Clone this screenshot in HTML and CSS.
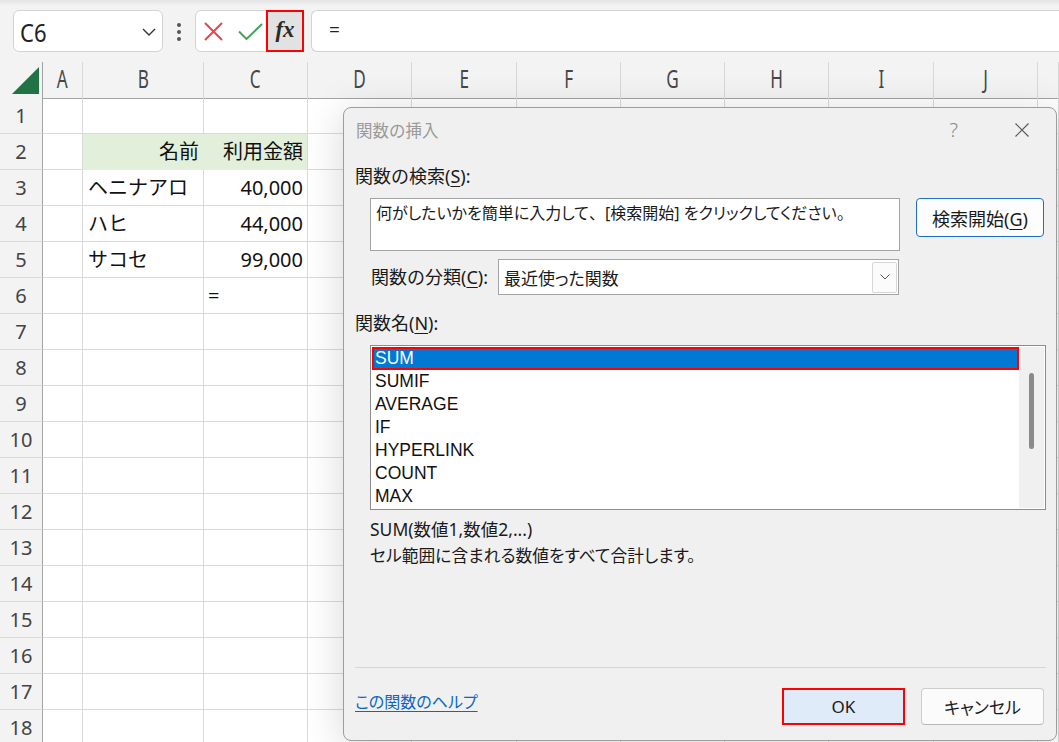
FILE: index.html
```html
<!DOCTYPE html>
<html lang="ja">
<head>
<meta charset="utf-8">
<title>関数の挿入</title>
<link rel="stylesheet" href="styles.css">
</head>
<body>
<div class="app">
  <div class="fbar">
    <div class="namebox">
      <span class="nb-text">C6</span>
      <svg class="nb-chev" width="14" height="8" viewBox="0 0 14 8"><path d="M1 1 L7 7 L13 1" fill="none" stroke="#333" stroke-width="1.4"/></svg>
    </div>
    <div class="kebab"><i></i><i></i><i></i></div>
    <div class="fbtns">
      <svg class="fb-x" width="19" height="19" viewBox="0 0 19 19"><path d="M1 1 L18 18 M18 1 L1 18" stroke="#e8464c" stroke-width="2" fill="none"/></svg>
      <svg class="fb-ok" width="25" height="17" viewBox="0 0 25 17"><path d="M1 8.5 L8.5 16 L24 1" stroke="#46a35a" stroke-width="2" fill="none"/></svg>
      <span class="fb-fx">fx</span>
    </div>
    <div class="finput">=</div>
  </div>

  <div class="sheet">
    <div class="row hdr">
      <div class="c rh corner"><svg width="42" height="35" viewBox="0 0 42 35"><polygon points="39,5 39,32 12,32" fill="#217346"/></svg></div>
      <div class="c ch"><span>A</span></div>
      <div class="c ch"><span>B</span></div>
      <div class="c ch"><span>C</span></div>
      <div class="c ch"><span>D</span></div>
      <div class="c ch"><span>E</span></div>
      <div class="c ch"><span>F</span></div>
      <div class="c ch"><span>G</span></div>
      <div class="c ch"><span>H</span></div>
      <div class="c ch"><span>I</span></div>
      <div class="c ch"><span>J</span></div>
      <div class="c ch"><span></span></div>
    </div>
    <div class="row"><div class="c rh">1</div><div class="c"></div><div class="c"></div><div class="c"></div><div class="c"></div><div class="c"></div><div class="c"></div><div class="c"></div><div class="c"></div><div class="c"></div><div class="c"></div><div class="c"></div></div>
    <div class="row"><div class="c rh">2</div><div class="c"></div><div class="c fill fill-l r">名前</div><div class="c fill r">利用金額</div><div class="c"></div><div class="c"></div><div class="c"></div><div class="c"></div><div class="c"></div><div class="c"></div><div class="c"></div><div class="c"></div></div>
    <div class="row"><div class="c rh">3</div><div class="c"></div><div class="c">ヘニナアロ</div><div class="c r">40,000</div><div class="c"></div><div class="c"></div><div class="c"></div><div class="c"></div><div class="c"></div><div class="c"></div><div class="c"></div><div class="c"></div></div>
    <div class="row"><div class="c rh">4</div><div class="c"></div><div class="c">ハヒ</div><div class="c r">44,000</div><div class="c"></div><div class="c"></div><div class="c"></div><div class="c"></div><div class="c"></div><div class="c"></div><div class="c"></div><div class="c"></div></div>
    <div class="row"><div class="c rh">5</div><div class="c"></div><div class="c">サコセ</div><div class="c r">99,000</div><div class="c"></div><div class="c"></div><div class="c"></div><div class="c"></div><div class="c"></div><div class="c"></div><div class="c"></div><div class="c"></div></div>
    <div class="row"><div class="c rh">6</div><div class="c"></div><div class="c"></div><div class="c eq">=</div><div class="c"></div><div class="c"></div><div class="c"></div><div class="c"></div><div class="c"></div><div class="c"></div><div class="c"></div><div class="c"></div></div>
    <div class="row"><div class="c rh">7</div><div class="c"></div><div class="c"></div><div class="c"></div><div class="c"></div><div class="c"></div><div class="c"></div><div class="c"></div><div class="c"></div><div class="c"></div><div class="c"></div><div class="c"></div></div>
    <div class="row"><div class="c rh">8</div><div class="c"></div><div class="c"></div><div class="c"></div><div class="c"></div><div class="c"></div><div class="c"></div><div class="c"></div><div class="c"></div><div class="c"></div><div class="c"></div><div class="c"></div></div>
    <div class="row"><div class="c rh">9</div><div class="c"></div><div class="c"></div><div class="c"></div><div class="c"></div><div class="c"></div><div class="c"></div><div class="c"></div><div class="c"></div><div class="c"></div><div class="c"></div><div class="c"></div></div>
    <div class="row"><div class="c rh">10</div><div class="c"></div><div class="c"></div><div class="c"></div><div class="c"></div><div class="c"></div><div class="c"></div><div class="c"></div><div class="c"></div><div class="c"></div><div class="c"></div><div class="c"></div></div>
    <div class="row"><div class="c rh">11</div><div class="c"></div><div class="c"></div><div class="c"></div><div class="c"></div><div class="c"></div><div class="c"></div><div class="c"></div><div class="c"></div><div class="c"></div><div class="c"></div><div class="c"></div></div>
    <div class="row"><div class="c rh">12</div><div class="c"></div><div class="c"></div><div class="c"></div><div class="c"></div><div class="c"></div><div class="c"></div><div class="c"></div><div class="c"></div><div class="c"></div><div class="c"></div><div class="c"></div></div>
    <div class="row"><div class="c rh">13</div><div class="c"></div><div class="c"></div><div class="c"></div><div class="c"></div><div class="c"></div><div class="c"></div><div class="c"></div><div class="c"></div><div class="c"></div><div class="c"></div><div class="c"></div></div>
    <div class="row"><div class="c rh">14</div><div class="c"></div><div class="c"></div><div class="c"></div><div class="c"></div><div class="c"></div><div class="c"></div><div class="c"></div><div class="c"></div><div class="c"></div><div class="c"></div><div class="c"></div></div>
    <div class="row"><div class="c rh">15</div><div class="c"></div><div class="c"></div><div class="c"></div><div class="c"></div><div class="c"></div><div class="c"></div><div class="c"></div><div class="c"></div><div class="c"></div><div class="c"></div><div class="c"></div></div>
    <div class="row"><div class="c rh">16</div><div class="c"></div><div class="c"></div><div class="c"></div><div class="c"></div><div class="c"></div><div class="c"></div><div class="c"></div><div class="c"></div><div class="c"></div><div class="c"></div><div class="c"></div></div>
    <div class="row"><div class="c rh">17</div><div class="c"></div><div class="c"></div><div class="c"></div><div class="c"></div><div class="c"></div><div class="c"></div><div class="c"></div><div class="c"></div><div class="c"></div><div class="c"></div><div class="c"></div></div>
    <div class="row"><div class="c rh">18</div><div class="c"></div><div class="c"></div><div class="c"></div><div class="c"></div><div class="c"></div><div class="c"></div><div class="c"></div><div class="c"></div><div class="c"></div><div class="c"></div><div class="c"></div></div>
  </div>

  <div class="dialog">
    <div class="dlg-title">
      <span class="dlg-name">関数の挿入</span>
      <span class="dlg-help">?</span>
      <svg class="dlg-close" width="14" height="14" viewBox="0 0 14 14"><path d="M0.5 0.5 L13.5 13.5 M13.5 0.5 L0.5 13.5" stroke="#5a5a5a" stroke-width="1.2" fill="none"/></svg>
    </div>
    <div class="dlg-body">
      <div class="lbl lbl-search">関数の検索(<u>S</u>):</div>
      <div class="search-row">
        <div class="search-box">何がしたいかを簡単に入力して<span class="fw">、</span>[検索開始] をクリックしてください。</div>
        <button class="btn btn-search">検索開始(<u>G</u>)</button>
      </div>
      <div class="cat-row">
        <span class="lbl lbl-cat">関数の分類(<u>C</u>):</span>
        <div class="select">
          <span class="sel-text">最近使った関数</span>
          <span class="sel-btn"><svg width="10" height="6" viewBox="0 0 10 6"><path d="M0.5 0.5 L5 5 L9.5 0.5" fill="none" stroke="#555" stroke-width="1"/></svg></span>
        </div>
      </div>
      <div class="lbl lbl-names">関数名(<u>N</u>):</div>
      <div class="listbox">
        <div class="items">
          <div class="item sel">SUM</div>
          <div class="item">SUMIF</div>
          <div class="item">AVERAGE</div>
          <div class="item">IF</div>
          <div class="item">HYPERLINK</div>
          <div class="item">COUNT</div>
          <div class="item">MAX</div>
        </div>
        <div class="vscroll"><div class="thumb"></div></div>
      </div>
      <div class="sig">SUM(数値1,数値2,...)</div>
      <div class="desc">セル範囲に含まれる数値をすべて合計します。</div>
    </div>
    <div class="dlg-foot">
      <a class="help-link">この関数のヘルプ</a>
      <div class="foot-btns">
        <button class="btn btn-ok">OK</button>
        <button class="btn btn-cancel">キャンセル</button>
      </div>
    </div>
  </div>
</div>
</body>
</html>
```

FILE: styles.css
```css
* { box-sizing: border-box; }
html, body { margin: 0; padding: 0; }
body {
  width: 1059px;
  height: 742px;
  overflow: hidden;
  background: #fff;
  font-family: "Noto Sans", "Noto Sans CJK JP", sans-serif;
  color: #111;
}
.app {
  position: relative;
  width: 1059px;
  height: 742px;
  overflow: hidden;
}

/* formula bar */
.fbar {
  height: 62px;
  display: flex;
  align-items: flex-start;
  padding: 10px 0 0 13px;
  background: linear-gradient(#e4e4e4, #f3f3f3 6px, #f3f3f3);
}
.namebox {
  width: 150px;
  height: 42px;
  background: #fff;
  border: 1px solid #d3d3d3;
  border-radius: 6px;
  display: flex;
  align-items: center;
  justify-content: space-between;
  padding: 0 6px 0 6px;
}
.nb-text {
  display: inline-block;
  font-size: 25px;
  color: #222;
  line-height: 1;
  transform: scaleX(0.88);
  transform-origin: left center;
  margin-top: 2px;
}
.nb-chev { margin-top: 1px; }
.kebab {
  margin: 13px 0 0 14px;
  width: 5px;
  display: flex;
  flex-direction: column;
  gap: 3px;
}
.kebab i {
  display: block;
  width: 4px;
  height: 4px;
  border-radius: 50%;
  background: #555;
}
.fbtns {
  margin-left: 13px;
  width: 109px;
  height: 42px;
  background: #fff;
  border: 1px solid #d3d3d3;
  border-radius: 6px;
  display: flex;
  align-items: center;
  padding-left: 8px;
}
.fb-x { margin-top: 1px; }
.fb-ok { margin-left: 15px; margin-top: 1px; }
.fb-fx {
  margin: -1px -1px -1px auto;
  width: 38px;
  height: 42px;
  border: 2px solid #f00;
  background: #e2e2e2;
  font-family: "Liberation Serif", serif;
  font-style: italic;
  font-weight: bold;
  font-size: 23px;
  color: #2a2a2a;
  display: flex;
  align-items: center;
  justify-content: center;
  padding-bottom: 2px;
}
.finput {
  margin-left: 7px;
  flex: 1;
  height: 42px;
  background: #fff;
  border: 1px solid #d3d3d3;
  border-right: none;
  border-radius: 6px 0 0 6px;
  padding-left: 17px;
  font-size: 19px;
  line-height: 38px;
  color: #222;
}

/* sheet */
.row {
  display: grid;
  grid-template-columns: 43px 40px 121px 104px 104px 105px 104px 104px 104px 105px 104px 1fr;
  height: 36px;
}
.c {
  border-right: 1px solid #dadada;
  border-bottom: 1px solid #dadada;
  line-height: 35px;
  font-size: 20px;
  padding: 0 4px 0 5px;
  white-space: nowrap;
  overflow: hidden;
  color: #111;
}
.c.r { text-align: right; }
.c.eq { padding-left: 4px; }
.fill { background: #e2efda; border-bottom-color: #e2efda; }
.fill-l { border-right-color: #e2efda; }
.rh {
  background: #f3f3f3;
  border-right-color: #a3a3a3;
  border-bottom-color: #dadada;
  text-align: center;
  padding: 0;
  color: #444;
}
.hdr .c {
  background: #f3f3f3;
  border-bottom-color: #a3a3a3;
  border-right-color: #d8d8d8;
}
.hdr .rh { border-right-color: #a3a3a3; }
.corner { display: block; }
.corner svg { display: block; }
.ch {
  text-align: center;
  padding: 0;
  overflow: visible;
}
.ch span {
  display: inline-block;
  font-size: 26px;
  font-weight: 400;
  line-height: 33px;
  color: #474747;
  transform: scaleX(0.66);
}

/* dialog */
.dialog {
  position: absolute;
  left: 343px;
  top: 107px;
  width: 714px;
  height: 634px;
  background: #f0f0f0;
  border: 1px solid #9d9d9d;
  border-radius: 8px;
  box-shadow: 0 6px 40px rgba(0, 0, 0, 0.16);
  display: flex;
  flex-direction: column;
  font-family: "Noto Sans", "Noto Sans CJK JP", sans-serif;
  font-size: 17px;
  color: #1a1a1a;
}
.dlg-title {
  height: 43px;
  flex: none;
  display: flex;
  align-items: center;
  padding: 0 27px 0 12px;
  color: #9a9a9a;
  font-size: 16.5px;
}
.dlg-help {
  margin-left: auto;
  margin-right: 57px;
  font-size: 20px;
  font-weight: 300;
  color: #8a8a8a;
}
.dlg-body {
  padding: 0 10px 0 11px;
}
.lbl { line-height: 24px; font-size: 18px; }
.lbl u, .btn u { text-underline-offset: 3px; text-decoration-thickness: 1px; }
.lbl-search { margin-top: 13px; }
.search-row {
  margin-top: 10px;
  padding-left: 15px;
  display: flex;
  align-items: flex-start;
  gap: 16px;
}
.search-box {
  width: 530px;
  height: 53px;
  background: #fff;
  border: 1px solid #a3a3a3;
  padding: 2px 0 0 5px;
  line-height: 24px;
  font-size: 16px;
  font-feature-settings: "palt";
}
.search-box .fw { font-feature-settings: normal; }
.btn {
  font: inherit;
  color: #1a1a1a;
  padding: 0;
  cursor: default;
}
.btn-search {
  width: 128px;
  height: 39px;
  background: #fdfdfd;
  border: 1px solid #1c6fc4;
  border-radius: 4px;
  font-size: 18px;
}
.cat-row {
  margin-top: 8px;
  padding-left: 16px;
  display: flex;
  align-items: center;
  height: 36px;
}
.lbl-cat { width: 127px; flex: none; }
.select {
  width: 401px;
  height: 36px;
  background: #fff;
  border: 1px solid #a3a3a3;
  display: flex;
  align-items: center;
  justify-content: space-between;
  padding: 2px 1px 2px 5px;
  font-feature-settings: "palt";
}
.sel-btn {
  width: 25px;
  height: 31px;
  border: 1px solid #d6d6d6;
  border-radius: 2px;
  background: #fbfbfb;
  display: flex;
  align-items: center;
  justify-content: center;
}
.lbl-names { margin-top: 16px; }
.listbox {
  margin: 10px 0 0 15px;
  width: 676px;
  height: 165px;
  background: #fff;
  border: 1px solid #8c8c8c;
  padding: 1px;
  display: flex;
}
.items { flex: 1; }
.item {
  height: 23px;
  line-height: 23px;
  padding-left: 3px;
  font-family: "Liberation Sans", "Noto Sans", sans-serif;
  font-size: 17.5px;
  color: #111;
}
.item.sel {
  background: #0078d4;
  color: #fff;
  border: 2px solid #f00;
  line-height: 19px;
  padding-left: 1px;
}
.vscroll {
  width: 25px;
  background: #f0f0f0;
  padding: 26px 0 0 10px;
}
.thumb {
  width: 5px;
  height: 76px;
  border-radius: 3px;
  background: #8a8a8a;
}
.sig {
  margin-top: 7px;
  padding-left: 15px;
  line-height: 24px;
  font-size: 17.5px;
}
.desc {
  margin-top: 3px;
  padding-left: 15px;
  line-height: 24px;
  font-size: 16.8px;
  font-feature-settings: "palt";
}
.dlg-foot {
  margin: auto 10px 0 11px;
  height: 73px;
  flex: none;
  border-top: 1px solid #d6d6d6;
  display: flex;
  justify-content: space-between;
  align-items: flex-start;
  padding: 20px 2px 0 0;
}
.help-link {
  margin-top: 2px;
  line-height: 24px;
  color: #0a67c6;
  text-decoration: underline;
  text-underline-offset: 3px;
  font-size: 16px;
  font-feature-settings: "palt";
}
.foot-btns {
  display: flex;
  gap: 16px;
}
.btn-ok {
  width: 123px;
  height: 37px;
  background: #dfebf8;
  border: 2px solid #f00;
  font-size: 17px;
}
.btn-cancel {
  width: 123px;
  height: 37px;
  background: #fbfbfb;
  border: 1px solid #cdcdcd;
  border-bottom-color: #b8b8b8;
  border-radius: 4px;
  font-size: 17px;
  font-feature-settings: "palt";
}
```
